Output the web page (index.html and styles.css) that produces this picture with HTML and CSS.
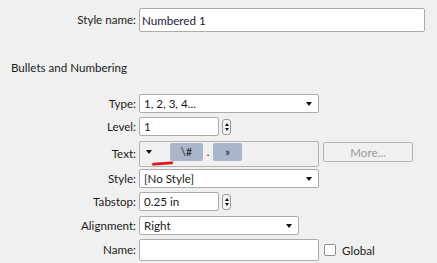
FILE: index.html
```html
<!DOCTYPE html>
<html>
<head>
<meta charset="utf-8">
<link rel="stylesheet" href="styles.css">
</head>
<body>
<div class="dlg">
  <div class="row r-name">
    <label class="lbl">Style name:</label>
    <div class="input big">Numbered 1</div>
  </div>
  <div class="heading">Bullets and Numbering</div>
  <div class="row r-type">
    <label class="lbl">Type:</label>
    <div class="combo wide"><span>1, 2, 3, 4...</span><i class="arrow"></i></div>
  </div>
  <div class="row r-level">
    <label class="lbl">Level:</label>
    <div class="input short">1</div>
    <div class="spin"><i class="up"></i><i class="down"></i></div>
  </div>
  <div class="row r-text">
    <label class="lbl">Text:</label>
    <div class="textbox">
      <i class="arrow"></i>
      <span class="squiggle"></span>
      <span class="chip c1">\#</span>
      <span class="dot">.</span>
      <span class="chip c2">»</span>
    </div>
    <div class="more">More...</div>
  </div>
  <div class="row r-style">
    <label class="lbl">Style:</label>
    <div class="combo wide"><span>[No Style]</span><i class="arrow"></i></div>
  </div>
  <div class="row r-tab">
    <label class="lbl">Tabstop:</label>
    <div class="input short">0.25 in</div>
    <div class="spin"><i class="up"></i><i class="down"></i></div>
  </div>
  <div class="row r-align">
    <label class="lbl">Alignment:</label>
    <div class="combo mid"><span>Right</span><i class="arrow"></i></div>
  </div>
  <div class="row r-nm">
    <label class="lbl">Name:</label>
    <div class="input wide tall"></div>
    <div class="check"></div>
    <span class="global">Global</span>
  </div>
</div>
</body>
</html>
```

FILE: styles.css
```css
html, body {
  margin: 0;
  padding: 0;
  background: #f0f0f0;
}
.dlg {
  font-family: Lato, "Noto Sans", sans-serif;
  font-size: 11.6px;
  color: #1b1b1b;
  width: 437px;
  height: 263px;
  overflow: hidden;
  padding-top: 8px;
  box-sizing: border-box;
}
.row {
  display: flex;
  align-items: center;
  height: 19px;
}
.lbl {
  width: 139px;
  flex: none;
  text-align: right;
  padding-right: 3px;
  box-sizing: border-box;
  white-space: nowrap;
  line-height: 16px;
}
.input, .combo {
  box-sizing: border-box;
  background: #fff;
  border: 1px solid #acacac;
  border-radius: 2px;
  height: 19px;
  display: flex;
  align-items: center;
  padding-left: 4px;
  white-space: nowrap;
}
.r-name { height: 24px; }
.input.big {
  width: 286px;
  height: 24px;
  padding-left: 2px;
  color: #1a1a40;
}
.wide { width: 180px; }
.mid { width: 160px; }
.short { width: 80px; }
.r-nm { height: 22px; }
.input.tall { height: 22px; }
.combo { justify-content: space-between; padding-right: 6px; }
.arrow {
  width: 0;
  height: 0;
  border-left: 3.5px solid transparent;
  border-right: 3.5px solid transparent;
  border-top: 4px solid #111;
}
.heading {
  margin: 27px 0 0 11px;
  height: 18px;
  line-height: 18px;
}
.r-type { margin-top: 17px; }
.r-level { margin-top: 4px; }
.r-text { margin-top: 5px; height: 26px; }
.r-style { margin-top: 2px; }
.r-tab { margin-top: 4px; }
.r-align { margin-top: 5px; }
.r-nm { margin-top: 4px; }
.spin {
  margin-left: 3px;
  width: 9px;
  height: 16px;
  box-sizing: border-box;
  border: 1px solid #9a9a9a;
  border-radius: 3px;
  background: #f4f4f4;
  display: flex;
  flex-direction: column;
  align-items: center;
  justify-content: center;
  gap: 2px;
}
.spin .up {
  width: 0; height: 0;
  border-left: 2.5px solid transparent;
  border-right: 2.5px solid transparent;
  border-bottom: 3px solid #111;
}
.spin .down {
  width: 0; height: 0;
  border-left: 2.5px solid transparent;
  border-right: 2.5px solid transparent;
  border-top: 3px solid #111;
}
.textbox {
  position: relative;
  width: 180px;
  height: 26px;
  box-sizing: border-box;
  border: 1px solid #b4b4b4;
  border-radius: 2px;
  display: flex;
  align-items: center;
  padding-left: 6px;
  padding-bottom: 5px;
}
.squiggle {
  position: absolute;
  left: 12px;
  top: 20px;
  width: 21px;
  height: 3px;
  background: #e0141e;
  border-radius: 2px;
  transform: rotate(-4deg);
}
.chip {
  background: #a9b5ca;
  border-radius: 2px;
  height: 18px;
  display: flex;
  align-items: center;
  justify-content: center;
  font-size: 11px;
  color: #222;
}
.c1 { width: 33px; margin-left: 18px; }
.c2 { width: 29px; }
.dot { width: 10px; text-align: center; font-size: 11px; }
.more {
  margin-left: 4px;
  margin-bottom: 4px;
  width: 90px;
  height: 20px;
  box-sizing: border-box;
  border: 1px solid #b4b4b4;
  border-radius: 2px;
  color: #9a9a9a;
  display: flex;
  align-items: center;
  justify-content: center;
}
.check {
  margin-left: 5px;
  width: 12px;
  height: 12px;
  box-sizing: border-box;
  border: 1px solid #8e8e8e;
  border-radius: 2px;
  background: #fff;
}
.global {
  margin-left: 6px;
}
```
